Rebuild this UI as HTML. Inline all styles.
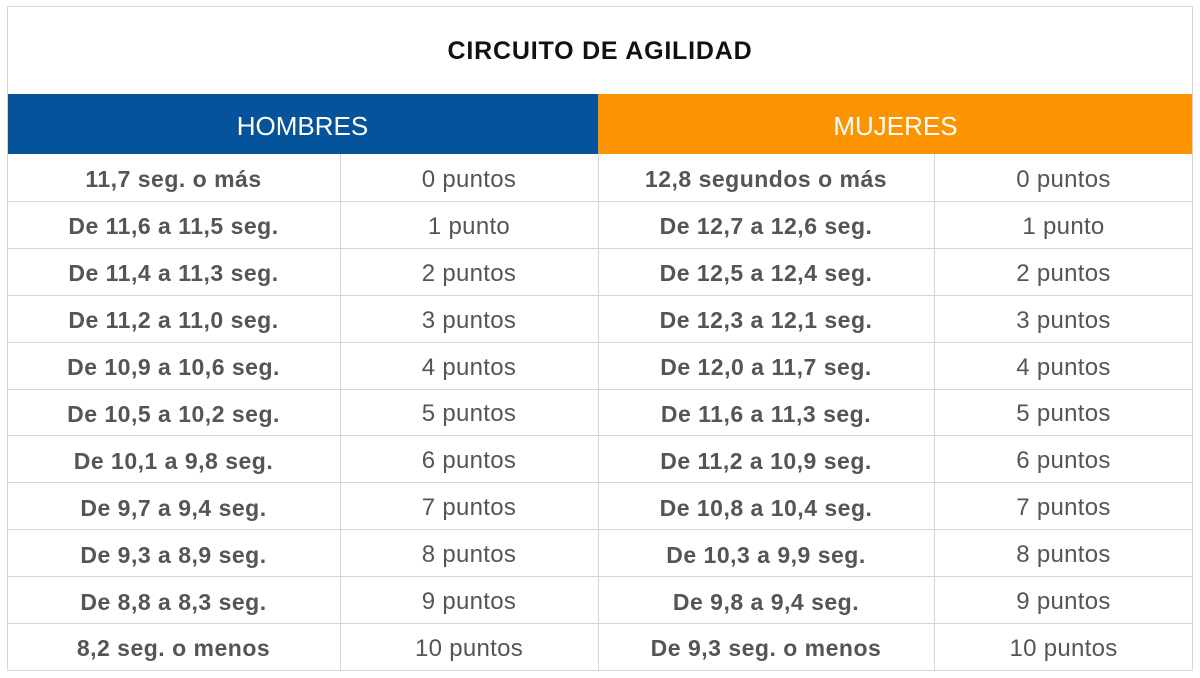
<!DOCTYPE html>
<html><head><style>
body{margin:0;width:1200px;height:678px;background:#fff;font-family:"Liberation Sans",Arial,sans-serif;position:relative;overflow:hidden}
.a{position:absolute;display:flex;align-items:center;justify-content:center;box-sizing:border-box;padding-top:5px}
.b{font-weight:bold;color:#555;font-size:23px;letter-spacing:0.5px}
.n{color:#555;font-size:24px;letter-spacing:0.3px}
.h{position:absolute;background:#d6d6d6}
</style></head><body>
<div class="a" style="left:7px;top:6px;width:1186px;height:88px;border:1px solid #ccc;border-bottom:none;font-weight:bold;font-size:25px;letter-spacing:0.8px;color:#111;padding-top:2px">CIRCUITO DE AGILIDAD</div>
<div class="a" style="left:7px;top:94px;width:591px;height:60px;background:#05539a;color:#fff;font-size:26px">HOMBRES</div>
<div class="a" style="left:598px;top:94px;width:595px;height:60px;background:#fc9300;color:#fff;font-size:26px">MUJERES</div>
<div id="t"></div>
<script>
var d=[["11,7 seg. o más","0 puntos","12,8 segundos o más","0 puntos"],["De 11,6 a 11,5 seg.","1 punto","De 12,7 a 12,6 seg.","1 punto"],["De 11,4 a 11,3 seg.","2 puntos","De 12,5 a 12,4 seg.","2 puntos"],["De 11,2 a 11,0 seg.","3 puntos","De 12,3 a 12,1 seg.","3 puntos"],["De 10,9 a 10,6 seg.","4 puntos","De 12,0 a 11,7 seg.","4 puntos"],["De 10,5 a 10,2 seg.","5 puntos","De 11,6 a 11,3 seg.","5 puntos"],["De 10,1 a 9,8 seg.","6 puntos","De 11,2 a 10,9 seg.","6 puntos"],["De 9,7 a 9,4 seg.","7 puntos","De 10,8 a 10,4 seg.","7 puntos"],["De 9,3 a 8,9 seg.","8 puntos","De 10,3 a 9,9 seg.","8 puntos"],["De 8,8 a 8,3 seg.","9 puntos","De 9,8 a 9,4 seg.","9 puntos"],["8,2 seg. o menos","10 puntos","De 9,3 seg. o menos","10 puntos"]];
var xs=[7,340,598,934,1193],h='',rh=46.9;
for(var i=0;i<11;i++){var y=154+i*rh;
for(var j=0;j<4;j++)h+='<div class="a '+(j%2?'n':'b')+'" style="left:'+xs[j]+'px;top:'+y+'px;width:'+(xs[j+1]-xs[j])+'px;height:'+rh+'px">'+d[i][j]+'</div>';
h+='<div class="h" style="left:7px;top:'+Math.round(y+rh)+'px;width:1186px;height:1px"></div>';}
[7,340,598,934,1192].forEach(function(x){h+='<div class="h" style="left:'+x+'px;top:'+(x==7||x==1192?6:154)+'px;width:1px;height:'+(x==7||x==1192?665:516)+'px"></div>'});
h+='<div class="h" style="left:7px;top:6px;width:1186px;height:1px"></div>';
document.getElementById('t').innerHTML=h;
</script>
</body></html>
